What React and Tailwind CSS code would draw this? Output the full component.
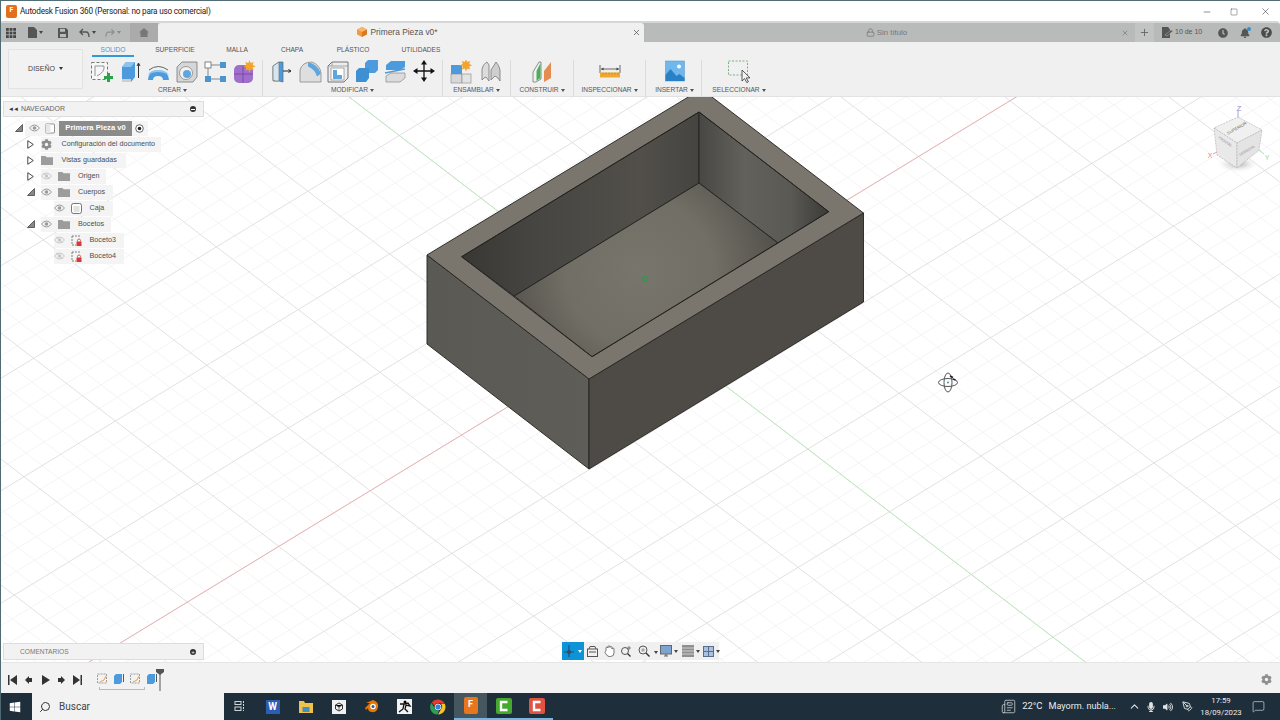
import { FaCog, FaWindows, FaClock, FaBell, FaQuestionCircle, FaVolumeUp, FaMicrophone } from "react-icons/fa";
import { Search, ChevronUp, MessageSquare, Lock, Plus, X, Minus, Square, Newspaper, PenTool } from "lucide-react";

const sans = "font-['Liberation_Sans',Arial,sans-serif]";
const segoe = "font-['Roboto','Noto_Sans',sans-serif]";

/* rejilla del plano: afín, celdas de 5 divisiones */
const O = [644.4, 323.6];
const U = [91.4, -55.7];
const V = [81.7, 62.7];
function gridPath(paso, saltarMayores) {
    let d = "";
    for (let k = -60; k <= 60; k++) {
        if (saltarMayores && k % 5 === 0) continue;
        const t = k * paso;
        const a = [O[0] + U[0] * t, O[1] + U[1] * t];
        const b = [O[0] + V[0] * t, O[1] + V[1] * t];
        d += `M${a[0] - V[0] * 14} ${a[1] - V[1] * 14}L${a[0] + V[0] * 14} ${a[1] + V[1] * 14}`;
        d += `M${b[0] - U[0] * 14} ${b[1] - U[1] * 14}L${b[0] + U[0] * 14} ${b[1] + U[1] * 14}`;
    }
    return d;
}

function Escena() {
    const borde = { stroke: "#23221f", strokeWidth: 0.9, strokeLinejoin: "round" };
    return (
        <svg className="absolute inset-0 w-full h-full" viewBox="1 97 1279 565">
            <defs>
                <linearGradient id="paredIzq" gradientUnits="userSpaceOnUse" x1="462" y1="0" x2="699" y2="0">
                    <stop offset="0" stopColor="#383734" />
                    <stop offset="0.3" stopColor="#464541" />
                    <stop offset="0.75" stopColor="#524f4a" />
                    <stop offset="1" stopColor="#454440" />
                </linearGradient>
                <linearGradient id="paredDer" gradientUnits="userSpaceOnUse" x1="699" y1="0" x2="829" y2="0">
                    <stop offset="0" stopColor="#484743" />
                    <stop offset="0.35" stopColor="#63615b" />
                    <stop offset="0.7" stopColor="#5b5954" />
                    <stop offset="1" stopColor="#3b3a37" />
                </linearGradient>
                <radialGradient id="suelo" gradientUnits="userSpaceOnUse" cx="640" cy="272" r="150">
                    <stop offset="0" stopColor="#78756c" />
                    <stop offset="0.5" stopColor="#716e65" />
                    <stop offset="1" stopColor="#4e4c47" />
                </radialGradient>
                <linearGradient id="caraIzq" x1="0" y1="0" x2="1" y2="0">
                    <stop offset="0" stopColor="#5b5954" />
                    <stop offset="1" stopColor="#5f5d57" />
                </linearGradient>
            </defs>
            <rect x="0" y="97" width="1280" height="565" fill="#ffffff" />
            <path d={gridPath(0.2, true)} stroke="#f1f1f1" strokeWidth="0.8" fill="none" />
            <path d={gridPath(1, false)} stroke="#dedede" strokeWidth="0.9" fill="none" />
            <line x1={O[0] - U[0] * 7} y1={O[1] - U[1] * 7} x2={O[0] + U[0] * 7} y2={O[1] + U[1] * 7} stroke="#eab4b4" strokeWidth="1" />
            <line x1={O[0] - V[0] * 5} y1={O[1] - V[1] * 5} x2={O[0] + V[0] * 5.5} y2={O[1] + V[1] * 5.5} stroke="#bfe8bf" strokeWidth="1" />

            <polygon points="427,255 589,379 589,469 427,344" fill="url(#caraIzq)" {...borde} />
            <polygon points="589,379 863.5,213 863.5,302 589,469" fill="#4e4b46" {...borde} />
            <polygon points="427,255 701.5,89 863.5,213 589,379" fill="#7a766d" {...borde} />
            <polygon points="461.7,256.7 699,112 699,183 514.3,296" fill="url(#paredIzq)" {...borde} />
            <polygon points="699,112 828.7,211.7 778,243 699,183" fill="url(#paredDer)" {...borde} />
            <polygon points="699,183 778,243 592,356.7 514.3,296" fill="url(#suelo)" {...borde} />
            <polygon points="461.7,256.7 699,112 828.7,211.7 592,356.7" fill="none" {...borde} />
            <circle cx="645" cy="278.7" r="2.2" fill="none" stroke="#2f9a48" strokeWidth="1.1" />

            {/* cursor de órbita */}
            <g fill="none" stroke="#555" strokeWidth="1">
                <ellipse cx="948" cy="382.5" rx="9.5" ry="4" />
                <ellipse cx="948" cy="382.5" rx="4" ry="9.5" />
            </g>
            <path d="M950 376l3 1.5M953 379l2.5 1" stroke="#222" strokeWidth="1.4" />
            <circle cx="948" cy="382.5" r="0.9" fill="#2b8aa0" />
        </svg>
    );
}

function CuboVista() {
    const cara = { stroke: "#b4b4b4", strokeWidth: 0.7, strokeDasharray: "2 1" };
    return (
        <svg className="absolute left-[1199px] top-[3px]" width="76" height="80" viewBox="0 0 76 80">
            <defs>
                <radialGradient id="sombraCubo">
                    <stop offset="0" stopColor="#a8a8a8" />
                    <stop offset="1" stopColor="#ffffff" stopOpacity="0" />
                </radialGradient>
            </defs>
            <ellipse cx="38" cy="64" rx="22" ry="9" fill="url(#sombraCubo)" />
            <polygon points="38,17 62,30 37,43 14,28" fill="#f0f0f0" {...cara} />
            <polygon points="14,28 37,43 37,68 17,55" fill="#e9e9e9" {...cara} />
            <polygon points="62,30 37,43 37,68 59,50" fill="#e4e4e4" {...cara} />
            <line x1="38" y1="11" x2="38" y2="17" stroke="#a7a7e0" strokeWidth="1" />
            <line x1="13" y1="54" x2="17" y2="52" stroke="#e5a0a0" strokeWidth="1" />
            <line x1="59" y1="50" x2="64" y2="54" stroke="#a8e0a8" strokeWidth="1" />
            <text x="39" y="10.5" textAnchor="middle" fontSize="8" fill="#8d8dd6" fontFamily="Liberation Sans">Z</text>
            <text x="10" y="58" textAnchor="middle" fontSize="7" fill="#e08a9a" fontFamily="Liberation Sans">X</text>
            <text x="67" y="60" textAnchor="middle" fontSize="7" fill="#8fdc8f" fontFamily="Liberation Sans">Y</text>
            <text x="0" y="0" transform="translate(28,35) rotate(-30)" fontSize="4.2" fill="#666" fontFamily="Liberation Sans">SUPERIOR</text>
            <text x="0" y="0" transform="translate(18,38) rotate(35)" fontSize="3.5" fill="#888" fontFamily="Liberation Sans">FRONTAL</text>
            <text x="0" y="0" transform="translate(40,56) rotate(-30)" fontSize="3.5" fill="#888" fontFamily="Liberation Sans">DERECHA</text>
        </svg>
    );
}

/* iconos de la cinta */
const I = ({ children, w = 24 }) => (
    <svg width={w} height="24" viewBox={`0 0 ${w} 24`} className="shrink-0">{children}</svg>
);

const IconoBoceto = () => (
    <I>
        <rect x="2.5" y="2.5" width="16" height="17" fill="#f7f7f7" stroke="#777" strokeDasharray="3 2" />
        <path d="M6 6v10M6 6h9q1 6-7 10" fill="none" stroke="#8a8a8a" strokeWidth="0.9" />
        <path d="M15 16h3v-3h3v3h3v3h-3v3h-3v-3h-3z" fill="#2aa44a" />
    </I>
);
const IconoExtruir = () => (
    <I>
        <polygon points="4,7 8,2 17,2 17,17 13,22 4,22" fill="#4d9bdc" />
        <polygon points="4,7 8,2 17,2 13,7" fill="#8cc3ee" />
        <polygon points="4,19 13,19 13,22 4,22" fill="#cfcfcf" />
        <path d="M20.5 18V4M19 6l1.5-3 1.5 3" stroke="#333" fill="none" />
    </I>
);
const IconoRevolucion = () => (
    <I>
        <path d="M3 10q9-7 19 0" fill="none" stroke="#555" strokeWidth="0.9" />
        <path d="M2 20q0-9 10-10q10 0 11 10h-6q0-4-5-4t-5 4z" fill="#4d9bdc" />
        <path d="M2 15q2-5 10-5q8 0 11 5q-5-3-11-3t-10 3z" fill="#90c6ef" />
    </I>
);
const IconoAgujero = () => (
    <I>
        <polygon points="2,7 7,2 22,2 22,17 18,22 2,22" fill="#d6d6d6" stroke="#777" strokeWidth="0.8" />
        <circle cx="11" cy="13" r="6.5" fill="#f2f2f2" stroke="#888" strokeWidth="0.8" />
        <circle cx="12" cy="14" r="4" fill="#5ea6dd" />
    </I>
);
const IconoPatron = () => (
    <I>
        <path d="M6 5h12M6 19h12M5 7v10" stroke="#888" fill="none" />
        <rect x="2" y="2" width="6" height="6" fill="#fff" stroke="#666" strokeWidth="0.8" />
        <rect x="17" y="2" width="6" height="6" fill="#4d94cf" />
        <rect x="2" y="16" width="6" height="6" fill="#4d94cf" />
        <rect x="17" y="16" width="6" height="6" fill="#4d94cf" />
    </I>
);
const IconoForma = () => (
    <I>
        <rect x="2" y="5" width="19" height="18" rx="5" fill="#a06ecb" />
        <path d="M11 6v17M2 14h19" stroke="#7c4ca8" />
        <path d="M17.5 0l1.2 3 3-1-1 3 3 1.2-3 1.2 1 3-3-1-1.2 3-1.2-3-3 1 1-3-3-1.2 3-1.2-1-3 3 1z" fill="#f3a42c" />
    </I>
);
const IconoPulsar = () => (
    <I>
        <path d="M4 6l6-4h4v20l-4-1H4z" fill="#4d9bdc" stroke="#666" strokeWidth="0.7" />
        <path d="M4 6l6-4v19H7q-3 0-3-2z" fill="#d5e6f3" stroke="#777" strokeWidth="0.7" />
        <path d="M14 11h7M19.5 9.5l2.5 1.5-2.5 1.5" stroke="#222" fill="none" />
    </I>
);
const IconoEmpalme = () => (
    <I>
        <path d="M2 22V10q2-8 12-8q8 3 9 11v9z" fill="#dedede" stroke="#888" strokeWidth="0.8" />
        <path d="M10 2.5q9 1 13 11l-4 3q-2-7-9-10z" fill="#5ea6dd" />
    </I>
);
const IconoChaflan = () => (
    <I>
        <polygon points="2,6 6,2 22,2 22,18 18,22 2,22" fill="#ededed" stroke="#666" strokeWidth="0.9" />
        <path d="M6 2v4H2M6 6h16" stroke="#888" fill="none" strokeWidth="0.7" />
        <rect x="5" y="8" width="13" height="12" fill="#fff" stroke="#888" strokeWidth="0.7" />
        <path d="M7 10h4v5h5v4H7z" fill="#5ea6dd" />
    </I>
);
const IconoCombinar = () => (
    <I>
        <polygon points="10,3 13,0 23,0 23,10 20,13 10,13" fill="#4d9bdc" />
        <polygon points="1,11 4,8 14,8 14,18 11,22 1,22" fill="#3f8fd3" />
    </I>
);
const IconoDesfase = () => (
    <I>
        <polygon points="3,5 8,1 22,1 22,7 17,10 3,10" fill="#4d9bdc" />
        <path d="M2 13L22 9" stroke="#4d9bdc" strokeWidth="1.5" />
        <polygon points="3,16 8,13 22,13 22,18 17,22 3,22" fill="#dcdcdc" stroke="#888" strokeWidth="0.7" />
    </I>
);
const IconoMover = () => (
    <I>
        <path d="M12 3v16M3 11h18" stroke="#111" strokeWidth="1.3" />
        <path d="M12 0l3 4.5h-6zM12 22l3-4.5h-6zM1 11l4.5-3v6zM23 11l-4.5-3v6z" fill="#111" />
    </I>
);
const IconoComponente = () => (
    <I>
        <rect x="1" y="5" width="11" height="9" fill="#4d9bdc" />
        <rect x="1" y="14" width="11" height="9" fill="#d8d8d8" stroke="#888" strokeWidth="0.6" />
        <rect x="12" y="14" width="9" height="9" fill="#e4e4e4" stroke="#888" strokeWidth="0.6" />
        <path d="M16 -1l1.2 3 3-1-1 3 3 1.2-3 1.2 1 3-3-1-1.2 3-1.2-3-3 1 1-3-3-1.2 3-1.2-1-3 3 1z" fill="#f3a42c" />
    </I>
);
const IconoUnion = () => (
    <I>
        <path d="M3 20V9q1-5 5-7l2 3v16l-3-4-2 1z" fill="#dcdcdc" stroke="#777" strokeWidth="0.8" />
        <path d="M21 21V10q-1-5-4-8l-3 5-2 3v10l4-4 3 2z" fill="#cfcfcf" stroke="#777" strokeWidth="0.8" />
    </I>
);
const IconoConstruir = () => (
    <I>
        <path d="M3 12l6-10h2v17l-5 3H3z" fill="#f0f0f0" stroke="#777" strokeWidth="0.8" />
        <path d="M6.5 11l4-8v15l-4 3z" fill="#4cae5a" />
        <path d="M14 11l7-9v16l-7 4z" fill="#e58c50" />
    </I>
);
const IconoMedir = () => (
    <I>
        <path d="M2 5v8M22 5v8M3 9h18" stroke="#444" fill="none" strokeWidth="0.8" />
        <path d="M3 9l2.5-1.4v2.8zM21 9l-2.5-1.4v2.8z" fill="#444" />
        <rect x="2" y="12.5" width="20" height="5" fill="#f0a830" />
        <path d="M5 12.5v2M8 12.5v2M11 12.5v2M14 12.5v2M17 12.5v2M20 12.5v2" stroke="#a87a1c" strokeWidth="0.6" />
    </I>
);
const IconoInsertar = () => (
    <I w={22}>
        <rect x="1.5" y="1" width="19" height="20" fill="#6fb7ec" stroke="#5e9fd0" strokeWidth="0.6" />
        <circle cx="15" cy="6.5" r="2" fill="#fff" />
        <path d="M1.5 21v-6l5-6 6 7 3-2 5 4v3z" fill="#2a80c4" />
    </I>
);
const IconoSeleccion = () => (
    <I>
        <rect x="1.5" y="1" width="19" height="14" fill="none" stroke="#79b08a" strokeDasharray="2 1.5" />
        <path d="M15 10v11l2.6-2.4 2.2 4 1.6-.8-2.1-3.9H23z" fill="#f2f2f2" stroke="#333" strokeWidth="0.8" />
    </I>
);

const grupos = [
    { nombre: "CREAR", ancho: 173, clase: "pr-[7px]", iconos: [IconoBoceto, IconoExtruir, IconoRevolucion, IconoAgujero, IconoPatron, IconoForma] },
    { nombre: "MODIFICAR", ancho: 180, clase: "", iconos: [IconoPulsar, IconoEmpalme, IconoChaflan, IconoCombinar, IconoDesfase, IconoMover] },
    { nombre: "ENSAMBLAR", ancho: 68, clase: "", iconos: [IconoComponente, IconoUnion] },
    { nombre: "CONSTRUIR", ancho: 63, clase: "", iconos: [IconoConstruir] },
    { nombre: "INSPECCIONAR", ancho: 72, clase: "", iconos: [IconoMedir] },
    { nombre: "INSERTAR", ancho: 56, clase: "pl-[2px]", iconos: [IconoInsertar] },
    { nombre: "SELECCIONAR", ancho: 70, clase: "pl-[4px] border-r-0", iconos: [IconoSeleccion] },
];

const pestanas = [
    { t: "SOLIDO", w: 42, activa: true },
    { t: "SUPERFICIE", w: 82 },
    { t: "MALLA", w: 42 },
    { t: "CHAPA", w: 68 },
    { t: "PLÁSTICO", w: 54 },
    { t: "UTILIDADES", w: 82 },
];

function Flechita({ color = "#555" }) {
    return <span className="inline-block ml-[2px] w-0 h-0 border-l-[2px] border-r-[2px] border-t-[3px] border-l-transparent border-r-transparent align-middle" style={{ borderTopColor: color }} />;
}

function Cinta() {
    return (
        <div className={`h-[55px] bg-[#f0f0f0] flex shrink-0 border-b border-[#e2e2e2] ${sans}`}>
            <div className="w-[89px] pl-[7px] pt-[7px] shrink-0">
                <div className="w-[75px] h-[40px] border border-[#e2e2e2] bg-[#f2f2f2] rounded-[1px] flex items-center justify-center text-[7px] text-[#444]">
                    DISEÑO <span className="ml-[2px]"><Flechita color="#333" /></span>
                </div>
            </div>
            <div className="flex flex-col">
                <div className="flex h-[16px] ml-[2px]">
                    {pestanas.map((p) => (
                        <div
                            key={p.t}
                            style={{ width: p.w }}
                            className={`h-[15px] pt-[3px] text-center text-[6.6px] leading-[9px] ${p.activa ? "text-[#3a9ad6] border-b-2 border-[#2f9ad8]" : "text-[#555]"}`}
                        >
                            {p.t}
                        </div>
                    ))}
                </div>
                <div className="flex h-[38px]">
                    {grupos.map((g) => (
                        <div key={g.nombre} style={{ width: g.ancho }} className={`border-r border-[#dcdcdc] h-[36px] mt-[2px] flex flex-col items-center ${g.clase}`}>
                            <div className="flex gap-[4.6px] h-[24px]">
                                {g.iconos.map((Ico, n) => <Ico key={n} />)}
                            </div>
                            <div className="text-[6.6px] leading-[9px] mt-[1px] text-[#555] whitespace-nowrap">
                                {g.nombre}<Flechita />
                            </div>
                        </div>
                    ))}
                </div>
            </div>
        </div>
    );
}

function BarraPestanas() {
    return (
        <div className={`h-[21px] shrink-0 bg-[#b8b9b9] border-t-2 border-[#d6d6d6] rounded-tr-[4px] flex items-stretch text-[#666] ${sans}`}>
            <div className="w-[129px] flex items-center shrink-0">
                <svg width="10" height="10" viewBox="0 0 10 10" className="ml-[5px]" fill="#444">
                    {[0, 3.6, 7.2].flatMap((x) => [0, 3.6, 7.2].map((y) => <rect key={`${x}-${y}`} x={x} y={y} width="2.8" height="2.8" />))}
                </svg>
                <svg width="9" height="11" viewBox="0 0 9 11" className="ml-[12px]"><path d="M0 0h6l3 3v8H0z" fill="#555" /></svg>
                <Flechita color="#444" />
                <svg width="10" height="10" viewBox="0 0 10 10" className="ml-[15px]"><path d="M0 0h8l2 2v8H0z" fill="#555" /><rect x="2" y="0.8" width="5" height="3" fill="#b8b9b9" /><rect x="2" y="6" width="6" height="3.2" fill="#b8b9b9" /></svg>
                <svg width="11" height="10" viewBox="0 0 11 10" className="ml-[11px]"><path d="M4 1L1 4l3 3M1 4h6q3 0 3 5" fill="none" stroke="#555" strokeWidth="1.4" /></svg>
                <Flechita color="#444" />
                <svg width="10" height="10" viewBox="0 0 11 10" className="ml-[9px]"><path d="M7 1l3 3-3 3M10 4H4q-3 0-3 5" fill="none" stroke="#8e8e8e" strokeWidth="1.3" /></svg>
                <Flechita color="#888" />
            </div>
            <div className="w-[28px] bg-[#ababab] flex items-center justify-center shrink-0">
                <svg width="10" height="9" viewBox="0 0 10 9"><path d="M5 0l5 4.4H8.5V9h-7V4.4H0z" fill="#777" /></svg>
            </div>
            {/* pestaña activa */}
            <div className="w-[486px] bg-[#f0f0f0] flex items-center shrink-0 rounded-tl-[3px] rounded-tr-[3px]">
                <div className="flex-1 flex items-center justify-center gap-[3px] pl-[5px] text-[8.4px] text-[#555]">
                    <svg width="10" height="10" viewBox="0 0 10 10">
                        <polygon points="5,0 10,2.5 10,7.5 5,10" fill="#d9791f" />
                        <polygon points="5,0 0,2.5 0,7.5 5,10" fill="#ef9a3e" />
                        <polygon points="5,0 10,2.5 5,5 0,2.5" fill="#f6b871" />
                    </svg>
                    Primera Pieza v0*
                </div>
                <X size={9} className="mr-[3px] text-[#555]" />
            </div>
            <div className="w-[2px] shrink-0" />
            {/* pestaña sin título */}
            <div className="w-[485px] bg-[#b9baba] flex items-center shrink-0 text-[7.8px] text-[#777]">
                <div className="flex-1 flex items-center justify-center gap-[2px] pl-[6px]">
                    <Lock size={9} />
                    Sin título
                </div>
                <X size={8} className="mr-[2px] text-[#777]" />
            </div>
            <div className="w-[4px] shrink-0" />
            <div className="w-[19px] bg-[#c2c3c3] flex items-center justify-center shrink-0">
                <Plus size={11} strokeWidth={2} className="text-[#666]" />
            </div>
            <div className="flex-1 flex items-center text-[#555] pl-[8px]">
                <svg width="11" height="11" viewBox="0 0 11 11"><path d="M0 0h6l2 2.5V11H0z" fill="#555" /><path d="M3 8l6-5 2 1-6 5z" fill="#555" stroke="#b8b9b9" strokeWidth="0.5" /></svg>
                <span className="text-[7px] ml-[2px]">10 de 10</span>
                <FaClock size={10} className="ml-[16px] text-[#555]" />
                <span className="relative ml-[12px]">
                    <FaBell size={10} className="text-[#555]" />
                    <span className="absolute -top-[1px] -right-[1px] w-[4px] h-[4px] rounded-full bg-[#2f8fd0]" />
                </span>
                <FaQuestionCircle size={11} className="ml-[11px] text-[#4a4a4a]" />
            </div>
        </div>
    );
}

/* árbol del navegador */
const Ojo = ({ apagado }) => (
    <svg width="11" height="8" viewBox="0 0 11 8" className="shrink-0">
        <path d="M0.5 4Q5.5-2 10.5 4Q5.5 10 0.5 4z" fill="none" stroke={apagado ? "#c6c6c6" : "#9a9a9a"} strokeWidth="1" />
        <circle cx="5.5" cy="4" r="1.8" fill={apagado ? "#c6c6c6" : "#9a9a9a"} />
        {apagado && <path d="M2 1l7 6" stroke="#c6c6c6" strokeWidth="0.8" />}
    </svg>
);
const Carpeta = () => (
    <svg width="12" height="9" viewBox="0 0 12 9" className="shrink-0"><path d="M0 0h4.5l1 1.2H12V9H0z" fill="#9c9c9c" /></svg>
);
const Cuerpo = () => (
    <svg width="11" height="11" viewBox="0 0 11 11" className="shrink-0"><rect x="0.5" y="0.5" width="10" height="10" rx="2" fill="#fff" stroke="#555" strokeWidth="0.8" /><rect x="2.5" y="3" width="6" height="6" fill="#e2e2e2" /></svg>
);
const BocetoBloqueado = () => (
    <svg width="11" height="11" viewBox="0 0 11 11" className="shrink-0">
        <path d="M1 1h8M1 1v9M1 10h4" stroke="#666" strokeWidth="0.8" strokeDasharray="2 1" fill="none" />
        <rect x="5.5" y="6.5" width="5" height="4.5" fill="#d43a3a" />
        <path d="M6.5 6.5V5.5a1.5 1.5 0 013 0v1" stroke="#d43a3a" strokeWidth="0.8" fill="none" />
    </svg>
);
const Abierto = () => (
    <svg width="8" height="8" viewBox="0 0 8 8" className="shrink-0"><polygon points="7.5,0.5 7.5,7.5 0.5,7.5" fill="#888" stroke="#333" strokeWidth="0.7" /></svg>
);
const Cerrado = () => (
    <svg width="7" height="9" viewBox="0 0 7 9" className="shrink-0"><polygon points="0.8,0.7 6.3,4.5 0.8,8.3" fill="#fff" stroke="#333" strokeWidth="0.9" /></svg>
);

const filas = [
    { flecha: <Cerrado />, nivel: 1, chip: 120, hijos: [<FaCog key="g" size={11} className="text-[#8c8c8c] shrink-0" />], gap: 9.5, texto: "Configuración del documento" },
    { flecha: <Cerrado />, nivel: 1, chip: 85, hijos: [<Carpeta key="c" />], gap: 8.5, texto: "Vistas guardadas" },
    { flecha: <Cerrado />, nivel: 1, chip: 65, hijos: [<Ojo key="o" apagado />, <Carpeta key="c" />], gap: 8, texto: "Origen" },
    { flecha: <Abierto />, nivel: 1, chip: 72, hijos: [<Ojo key="o" />, <Carpeta key="c" />], gap: 8, texto: "Cuerpos" },
    { nivel: 2, chip: 59, hijos: [<Ojo key="o" />, <Cuerpo key="b" />], gap: 8, texto: "Caja" },
    { flecha: <Abierto />, nivel: 1, chip: 70, hijos: [<Ojo key="o" />, <Carpeta key="c" />], gap: 8, texto: "Bocetos" },
    { nivel: 2, chip: 70, hijos: [<Ojo key="o" apagado />, <BocetoBloqueado key="b" />], gap: 8, texto: "Boceto3" },
    { nivel: 2, chip: 70, hijos: [<Ojo key="o" apagado />, <BocetoBloqueado key="b" />], gap: 8, texto: "Boceto4" },
];

function Navegador() {
    return (
        <div className={`absolute left-[2px] top-[4px] w-[201px] ${sans}`}>
            <div className="h-[16px] bg-[#f2f2f2] border border-[#dddddd] flex items-center text-[7px] text-[#666]">
                <span className="ml-[4px] text-[6px] text-[#333] tracking-[-1px]">◄◄</span>
                <span className="ml-[3px]">NAVEGADOR</span>
                <span className="ml-auto mr-[7px] w-[6px] h-[6px] rounded-full bg-[#333] flex items-center justify-center"><span className="w-[4px] h-[1px] bg-white" /></span>
            </div>
            <div className="flex items-center h-[16px] mt-[3px] ml-[12px]">
                <Abierto />
                <div className="h-[15px] w-[123px] ml-[2px] bg-[#f4f4f4]/90 flex items-center pl-[4px]">
                    <Ojo />
                    <svg width="10" height="11" viewBox="0 0 10 11" className="ml-[5px] shrink-0"><rect x="0.5" y="1" width="9" height="9" rx="1" fill="#fff" stroke="#666" strokeWidth="0.7" /><rect x="0.5" y="1" width="5" height="9" fill="#e7e7e7" /></svg>
                    <div className="w-[73px] h-[15px] bg-[#8b8b8b] ml-[4px] text-white text-[7.6px] font-bold flex items-center justify-center shrink-0">Primera Pieza v0</div>
                    <svg width="9" height="9" viewBox="0 0 9 9" className="ml-[3px] shrink-0"><circle cx="4.5" cy="4.5" r="3.8" fill="#fff" stroke="#444" strokeWidth="0.8" /><circle cx="4.5" cy="4.5" r="1.8" fill="#222" /></svg>
                </div>
            </div>
            {filas.map((f) => (
                <div key={f.texto} className={`relative flex items-center h-[16px] ${f.nivel === 1 ? "pl-[38px]" : "pl-[50.5px]"}`}>
                    {f.flecha && <span className="absolute left-[24px] flex items-center">{f.flecha}</span>}
                    <div className="h-[15px] bg-[#f3f3f3]/90 flex items-center gap-[6px] text-[7.2px] text-[#4d4d4d] whitespace-nowrap" style={{ width: f.chip }}>
                        {f.hijos}
                        <span style={{ marginLeft: f.gap - 6 }}>{f.texto}</span>
                    </div>
                </div>
            ))}
        </div>
    );
}

function BarraNavegacion() {
    return (
        <div className="absolute left-[561px] bottom-[2px] h-[18px] w-[157px] bg-[#f0f0f0] flex items-center text-[#555]">
            <div className="w-[22px] h-[18px] bg-[#0d94d8] flex items-center justify-center gap-[2px] shrink-0">
                <svg width="10" height="12" viewBox="0 0 10 12"><path d="M5 0v12M0 7h10" stroke="#2c4f6a" strokeWidth="1.2" /><circle cx="5" cy="7" r="2" fill="#2c4f6a" /></svg>
                <Flechita color="#fff" />
            </div>
            <svg width="11" height="11" viewBox="0 0 11 11" className="ml-[2.5px] shrink-0"><rect x="0.5" y="3" width="10" height="7.5" fill="none" stroke="#555" /><path d="M2 3l1-2.5h5L9 3M2 6h7" stroke="#555" fill="none" /></svg>
            <svg width="11" height="12" viewBox="0 0 11 12" className="ml-[6px] shrink-0"><path d="M2 6V3a1 1 0 012 0V1.8a1 1 0 012 0V2.5a1 1 0 012 0V4a1 1 0 012 0v4q0 3.5-3.5 3.5H5Q3 11.5 1 7.5q0-1 1-1.5z" fill="#fff" stroke="#555" strokeWidth="0.8" /></svg>
            <svg width="12" height="12" viewBox="0 0 12 12" className="ml-[5.5px] shrink-0"><circle cx="5" cy="6" r="3.5" fill="none" stroke="#555" /><path d="M7.5 8.5l3 3" stroke="#333" strokeWidth="1.3" /><path d="M9 1v4M7 3h4" stroke="#555" strokeWidth="0.7" /></svg>
            <svg width="12" height="12" viewBox="0 0 12 12" className="ml-[6px] shrink-0"><circle cx="5" cy="5" r="4" fill="#eee" stroke="#555" /><circle cx="5" cy="5" r="1.8" fill="#aaa" /><path d="M8 8l3.5 3.5" stroke="#333" strokeWidth="1.4" /></svg>
            <span className="ml-[2px]"><Flechita color="#444" /></span>
            <svg width="12" height="12" viewBox="0 0 12 12" className="ml-[2px] shrink-0"><rect x="0.5" y="0.5" width="11" height="8.5" fill="#7da4d0" stroke="#666" /><path d="M4 11h4M6 9v2" stroke="#666" strokeWidth="1.2" /></svg>
            <Flechita color="#444" />
            <svg width="12" height="12" viewBox="0 0 12 12" className="ml-[4px] shrink-0"><rect width="12" height="12" fill="#8f8f8f" /><path d="M0 3h12M0 6h12M0 9h12" stroke="#dedede" strokeWidth="0.8" /></svg>
            <Flechita color="#444" />
            <svg width="11" height="11" viewBox="0 0 11 11" className="ml-[2.5px] shrink-0"><rect x="0.5" y="0.5" width="10" height="10" fill="#a9c2e2" stroke="#566d8c" /><path d="M5.5 0v11M0 5.5h11" stroke="#566d8c" /></svg>
            <Flechita color="#444" />
        </div>
    );
}

function Canvas() {
    return (
        <div className="relative flex-1 overflow-hidden bg-white">
            <Escena />
            <CuboVista />
            <Navegador />
            <div className={`absolute left-[2px] bottom-[2px] w-[201px] h-[17px] bg-[#f2f2f2] border border-[#dddddd] flex items-center text-[6.6px] text-[#777] ${sans}`}>
                <span className="ml-[16px]">COMENTARIOS</span>
                <span className="ml-auto mr-[7px] w-[6px] h-[6px] rounded-full bg-[#333] flex items-center justify-center text-white text-[6px] leading-none">+</span>
            </div>
            <BarraNavegacion />
        </div>
    );
}

const Control = ({ d }) => (
    <svg width="9" height="10" viewBox="0 0 9 10" className="shrink-0"><path d={d} fill="#333" /></svg>
);

const MiniBoceto = () => (
    <svg width="11" height="12" viewBox="0 0 11 12" className="shrink-0"><rect x="0.5" y="1" width="9" height="9" fill="none" stroke="#888" strokeDasharray="2 1" strokeWidth="0.8" /><path d="M3 9q5-1 6-6" stroke="#e8a040" fill="none" /></svg>
);
const MiniExtrusion = () => (
    <svg width="11" height="12" viewBox="0 0 11 12" className="shrink-0"><polygon points="1,3 3,1 9,1 9,9 7,11 1,11" fill="#4d9bdc" /><path d="M10.5 9V1" stroke="#333" strokeWidth="0.8" /></svg>
);

function LineaTiempo() {
    return (
        <div className="h-[31px] shrink-0 bg-[#f2f2f2] border-t border-[#e6e6e6] pt-[3px] flex items-center">
            <div className="flex items-center gap-[7.3px] ml-[7px]">
                <Control d="M0 0h1.5v10H0zM9 0v10L2 5z" />
                <Control d="M1 5l4-4v8zM5 3h3v4H5z" />
                <Control d="M1 0l8 5-8 5z" />
                <Control d="M1 3h3v4H1zM4 1l4 4-4 4z" />
                <Control d="M7.5 0H9v10H7.5zM0 0l7 5-7 5z" />
            </div>
            <div className="flex flex-col ml-[15px] mt-[3px]">
                <div className="flex items-center gap-[5.3px]">
                    <MiniBoceto /><MiniExtrusion /><MiniBoceto /><MiniExtrusion />
                </div>
                <div className="h-[3px] w-[46px] ml-[2px] border border-t-0 border-[#bbb] mt-[2px]" />
            </div>
            {/* marcador de la línea de tiempo */}
            <svg width="8" height="22" viewBox="0 0 8 22" className="ml-[-1px] shrink-0"><path d="M0 0h8v3L4 6 0 3z" fill="#555" /><path d="M4 3v19" stroke="#555" strokeWidth="1" /></svg>
            <FaCog size={11} className="ml-auto mr-[8px] text-[#8e8e8e]" />
        </div>
    );
}

const CajaApp = ({ className = "", children }) => (
    <div className={`w-[33px] h-[27px] flex items-center justify-center shrink-0 ${className}`}>{children}</div>
);

function BarraTareas() {
    return (
        <div className={`h-[27px] shrink-0 bg-[#1e2e3a] flex items-stretch text-[#e8ecef] ${segoe}`}>
            <div className="w-[31px] flex items-center justify-center shrink-0 pr-[3px]">
                <FaWindows size={12} className="text-white" />
            </div>
            <div className="w-[192px] bg-[#f2f2f2] flex items-center shrink-0 text-[#444] text-[10px]">
                <Search size={12} className="ml-[7px] -scale-x-100 text-[#333]" />
                <span className="ml-[8px]">Buscar</span>
            </div>
            <div className="flex items-center -ml-[1px]">
                <CajaApp>
                    <svg width="11" height="11" viewBox="0 0 11 11" fill="none" stroke="#cfd6da"><rect x="1" y="0.5" width="6" height="3" /><rect x="1" y="6" width="6" height="3.5" /><path d="M9.5 0v10" strokeDasharray="2 1" /></svg>
                </CajaApp>
                <CajaApp>
                    <div className="w-[14px] h-[14px] bg-[#2b5db0] text-white text-[10px] font-bold leading-[14px] text-center">W</div>
                </CajaApp>
                <CajaApp>
                    <svg width="14" height="12" viewBox="0 0 14 12"><path d="M0 0h5l1 2h8v10H0z" fill="#f0c24a" /><rect x="3.5" y="6" width="7" height="5" fill="#3f8fc8" /></svg>
                </CajaApp>
                <CajaApp>
                    <svg width="14" height="14" viewBox="0 0 14 14"><rect width="14" height="14" fill="#f1f1f1" /><path d="M7 3l3.5 2v4L7 11 3.5 9V5z" fill="none" stroke="#333" /><path d="M3.5 5L7 7l3.5-2M7 7v4" stroke="#333" strokeWidth="0.7" /></svg>
                </CajaApp>
                <CajaApp>
                    <svg width="15" height="13" viewBox="0 0 15 13"><path d="M1 8l5-5-4 0 7-3q6 2 5 7-1 6-6 5-4 0-4-4l-2 2z" fill="#ea7600" /><circle cx="9" cy="6.5" r="2.8" fill="#fff" /><circle cx="9" cy="6.5" r="1.5" fill="#2b5f95" /></svg>
                </CajaApp>
                <CajaApp>
                    <svg width="15" height="15" viewBox="0 0 15 15"><rect width="15" height="15" fill="#f2f2f2" /><circle cx="8" cy="3" r="1.5" /><path d="M2 13l4-3 1-5 4-1 2 3-4-1-1 4 3 3M3 5l4 0" stroke="#111" strokeWidth="1.3" fill="none" /></svg>
                </CajaApp>
                <CajaApp>
                    <svg width="16" height="16" viewBox="0 0 32 32">
                        <path d="M16 1a15 15 0 0113 7.5H16a7.5 7.5 0 00-7 4.8L3.5 6.5A15 15 0 0116 1z" fill="#e33b2e" />
                        <path d="M29.5 9.5A15 15 0 0116 31l6.5-11.5a7.5 7.5 0 00-1-10z" fill="#f7c326" />
                        <path d="M15 31A15 15 0 013 7.5L9.5 19a7.5 7.5 0 008 4.5z" fill="#2ca24c" />
                        <circle cx="16" cy="16" r="6" fill="#3a7fe0" stroke="#fff" strokeWidth="1.5" />
                    </svg>
                </CajaApp>
                <CajaApp className="bg-[#46565f] border-b-2 border-[#75b7e0]">
                    <div className="w-[14px] h-[17px] bg-[#e8761c] rounded-[2px] text-white text-[9px] font-bold leading-[14px] text-center">F</div>
                </CajaApp>
                <CajaApp className="border-b-2 border-[#75b7e0]">
                    <svg width="16" height="16" viewBox="0 0 16 16"><rect width="16" height="16" rx="2" fill="#46a92f" /><path d="M11.5 4H5v8h6.5" fill="none" stroke="#fff" strokeWidth="2.4" /></svg>
                </CajaApp>
                <CajaApp className="border-b-2 border-[#75b7e0]">
                    <svg width="16" height="16" viewBox="0 0 16 16"><rect width="16" height="16" rx="2" fill="#e25241" /><path d="M11.5 4H5v8h6.5" fill="none" stroke="#fff" strokeWidth="2.4" /></svg>
                </CajaApp>
            </div>
            <div className="flex-1" />
            <div className="flex items-center text-[9.1px] shrink-0">
                <Newspaper size={15} strokeWidth={1.2} className="text-[#d5dbdf]" />
                <span className="ml-[6px] text-[9.5px]">22°C</span>
                <span className="ml-[6px]">Mayorm. nubla...</span>
                <ChevronUp size={13} className="ml-[12px] text-[#dfe4e7]" />
                <FaMicrophone size={10} className="ml-[5px] text-[#dfe4e7]" />
                <FaVolumeUp size={10} className="ml-[7px] text-[#dfe4e7]" />
                <PenTool size={11} className="ml-[9px] text-[#dfe4e7]" />
                <div className="w-[52px] ml-[2px] text-center text-[7.8px] leading-[12px] text-[#e8ecef]">
                    <div>17:59</div>
                    <div>18/09/2023</div>
                </div>
                <MessageSquare size={13} strokeWidth={1.2} className="ml-[5px] mr-[15px] text-[#dfe4e7]" />
            </div>
        </div>
    );
}

export default function App() {
    return (
        <div className="w-[1280px] h-[720px] flex flex-col overflow-hidden border-l border-[#4e6a72] bg-white">
            {/* barra de título */}
            <div className={`h-[21px] shrink-0 bg-white border-t border-[#516d75] pt-[1px] flex items-center ${segoe}`}>
                <div className="w-[11px] h-[13px] ml-[5px] rounded-[2px] bg-[#e2701c] text-white text-[7px] font-bold leading-[11px] text-center">F</div>
                <span className="ml-[3px] text-[8.2px] tracking-[-0.2px] text-[#222]">Autodesk Fusion 360 (Personal: no para uso comercial)</span>
                <div className="ml-auto flex items-center text-[#333]">
                    <Minus size={10} strokeWidth={1.3} />
                    <Square size={8} strokeWidth={1.3} className="ml-[18px]" />
                    <X size={11} strokeWidth={1.2} className="ml-[22px] mr-[9px]" />
                </div>
            </div>
            <BarraPestanas />
            <Cinta />
            <Canvas />
            <LineaTiempo />
            <BarraTareas />
        </div>
    );
}
